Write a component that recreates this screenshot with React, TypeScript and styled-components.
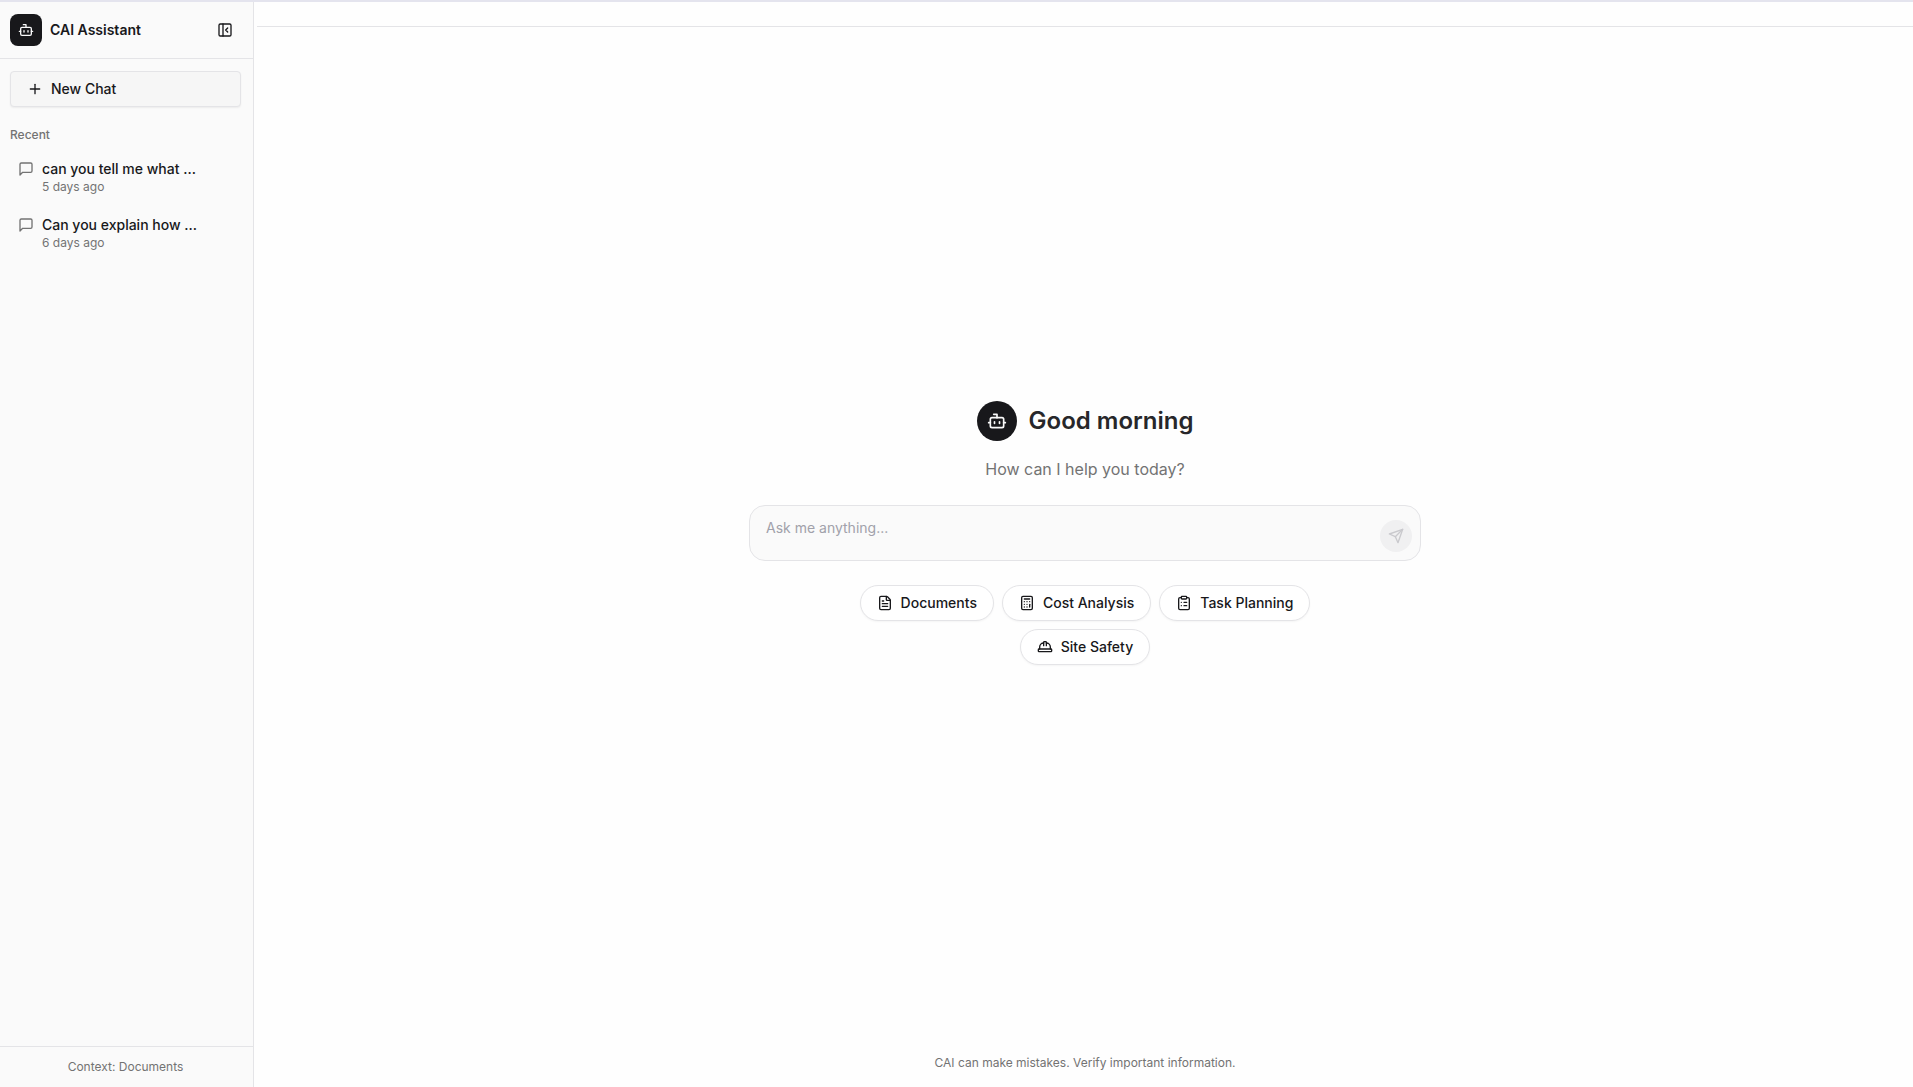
import React, { useState } from "react";
import styled, { createGlobalStyle } from "styled-components";
import {
  Bot,
  Calculator,
  ClipboardList,
  FileText,
  HardHat,
  PanelLeftClose,
  Plus,
  type LucideIcon,
} from "lucide-react";

const GlobalStyle = createGlobalStyle`
  *, *::before, *::after { box-sizing: border-box; }
  body {
    margin: 0;
    background: #fefefe;
    color: #18181b;
    font-family: Inter, "Liberation Sans", sans-serif;
    font-size: 14px;
    line-height: 20px;
  }
  button, textarea { font: inherit; color: inherit; }
  h1, h2, p, ul { margin: 0; padding: 0; }
`;

const Shell = styled.div`
  display: flex;
  min-height: 100vh;
  border-top: 2px solid #e4e4ee;
`;

const Sidebar = styled.aside`
  display: flex;
  flex-direction: column;
  flex: 0 0 254px;
  background: #fafafa;
  border-right: 1px solid #e4e4e7;
`;

const SidebarHeader = styled.header`
  display: flex;
  align-items: center;
  gap: 8px;
  padding: 12px 12px 12px 10px;
  border-bottom: 1px solid #e4e4e7;
`;

const Avatar = styled.span<{ $size: number; $radius: string }>`
  display: inline-flex;
  align-items: center;
  justify-content: center;
  flex: none;
  width: ${(p) => p.$size}px;
  height: ${(p) => p.$size}px;
  border-radius: ${(p) => p.$radius};
  background: #18181b;
  color: #fafafa;
`;

const Brand = styled.h2`
  flex: 1;
  font-size: 14px;
  font-weight: 600;
  line-height: 20px;
`;

const IconButton = styled.button`
  display: inline-flex;
  align-items: center;
  justify-content: center;
  width: 32px;
  height: 32px;
  padding: 0;
  border: 0;
  border-radius: 6px;
  background: transparent;
  cursor: pointer;
`;

const SidebarBody = styled.div`
  flex: 1;
  padding: 12px 12px 12px 10px;
`;

const NewChatButton = styled.button`
  display: flex;
  align-items: center;
  gap: 8px;
  width: 100%;
  height: 36px;
  padding: 0 16px;
  border: 1px solid #e4e4e7;
  border-radius: 4px;
  background: #f6f6f6;
  box-shadow: 0 1px 2px rgba(0, 0, 0, 0.06);
  font-weight: 500;
  cursor: pointer;
`;

const SectionLabel = styled.p`
  margin: 20px 0 8px;
  color: #737373;
  font-size: 12px;
  font-weight: 500;
  line-height: 16px;
`;

const ChatList = styled.ul`
  display: flex;
  flex-direction: column;
  gap: 4px;
  list-style: none;
`;

const ChatLink = styled.a`
  display: flex;
  gap: 8px;
  padding: 8px;
  border-radius: 6px;
  color: inherit;
  text-decoration: none;

  svg {
    flex: none;
    margin-top: 2px;
    color: #737373;
  }
`;

const ChatTitle = styled.span`
  display: block;
  font-weight: 500;
`;

const Caption = styled.span`
  display: block;
  color: #737373;
  font-size: 12px;
  line-height: 16px;
`;

const SidebarFooter = styled.footer`
  padding: 12px 12px 12px 10px;
  border-top: 1px solid #e4e4e7;
  text-align: center;
`;

const Main = styled.main`
  display: flex;
  flex-direction: column;
  flex: 1;
  min-width: 0;
  margin-left: 3px;
`;

const TopBar = styled.div`
  height: 25px;
  border-bottom: 1px solid #e4e4e7;
`;

const Welcome = styled.section`
  display: flex;
  flex-direction: column;
  align-items: center;
  justify-content: center;
  flex: 1;
  padding: 0 16px;
`;

const Greeting = styled.div`
  display: flex;
  align-items: center;
  gap: 12px;
`;

const Title = styled.h1`
  color: #27272a;
  font-size: 24px;
  font-weight: 600;
  line-height: 32px;
`;

const Subtitle = styled.p`
  margin-top: 16px;
  color: #737373;
  font-size: 16px;
  line-height: 24px;
`;

const Composer = styled.form`
  display: flex;
  align-items: flex-end;
  width: 100%;
  max-width: 672px;
  margin: 24px 0;
  border: 1px solid #e4e4e7;
  border-radius: 16px;
  background: #fafafa;
`;

const Prompt = styled.textarea`
  flex: 1;
  height: 54px;
  padding: 12px 16px;
  border: 0;
  outline: 0;
  resize: none;
  background: transparent;

  &::placeholder {
    color: #a1a1aa;
    opacity: 1;
  }
`;

const SendButton = styled.button`
  display: inline-flex;
  align-items: center;
  justify-content: center;
  width: 32px;
  height: 32px;
  margin: 8px;
  padding: 0;
  border: 0;
  border-radius: 50%;
  background: #f0f0f1;
  color: #c9c9cd;
`;

const Suggestions = styled.div`
  display: flex;
  flex-wrap: wrap;
  justify-content: center;
  gap: 8px;
  max-width: 512px;
`;

const Chip = styled.button`
  display: inline-flex;
  align-items: center;
  gap: 8px;
  height: 36px;
  padding: 0 16px;
  border: 1px solid #e4e4e7;
  border-radius: 18px;
  background: #ffffff;
  box-shadow: 0 1px 2px rgba(0, 0, 0, 0.04);
  font-weight: 500;
  cursor: pointer;
`;

const MainFooter = styled.footer`
  padding: 16px;
  text-align: center;
`;

const strokeProps = {
  width: 16,
  height: 16,
  viewBox: "0 0 24 24",
  fill: "none",
  stroke: "currentColor",
  strokeWidth: 2,
  strokeLinecap: "round" as const,
  strokeLinejoin: "round" as const,
  "aria-hidden": true,
};

const ChatIcon = () => (
  <svg {...strokeProps}>
    <path d="M21 15a2 2 0 0 1-2 2H7l-4 4V5a2 2 0 0 1 2-2h14a2 2 0 0 1 2 2z" />
  </svg>
);

const SendIcon = () => (
  <svg {...strokeProps}>
    <path d="m22 2-7 20-4-9-9-4Z" />
    <path d="M22 2 11 13" />
  </svg>
);

const chats = [
  { title: "can you tell me what ...", age: "5 days ago" },
  { title: "Can you explain how ...", age: "6 days ago" },
];

const suggestions: { label: string; icon: LucideIcon }[] = [
  { label: "Documents", icon: FileText },
  { label: "Cost Analysis", icon: Calculator },
  { label: "Task Planning", icon: ClipboardList },
  { label: "Site Safety", icon: HardHat },
];

export default function App() {
  const [prompt, setPrompt] = useState("");

  return (
    <>
      <GlobalStyle />
      <Shell>
        <Sidebar>
          <SidebarHeader>
            <Avatar $size={32} $radius="8px">
              <Bot size={16} />
            </Avatar>
            <Brand>CAI Assistant</Brand>
            <IconButton type="button" aria-label="Collapse sidebar">
              <PanelLeftClose size={16} />
            </IconButton>
          </SidebarHeader>
          <SidebarBody>
            <NewChatButton type="button">
              <Plus size={16} />
              New Chat
            </NewChatButton>
            <SectionLabel>Recent</SectionLabel>
            <ChatList>
              {chats.map((chat) => (
                <li key={chat.title}>
                  <ChatLink href="#">
                    <ChatIcon />
                    <span>
                      <ChatTitle>{chat.title}</ChatTitle>
                      <Caption>{chat.age}</Caption>
                    </span>
                  </ChatLink>
                </li>
              ))}
            </ChatList>
          </SidebarBody>
          <SidebarFooter>
            <Caption>Context: Documents</Caption>
          </SidebarFooter>
        </Sidebar>
        <Main>
          <TopBar />
          <Welcome>
            <Greeting>
              <Avatar $size={40} $radius="50%">
                <Bot size={20} />
              </Avatar>
              <Title>Good morning</Title>
            </Greeting>
            <Subtitle>How can I help you today?</Subtitle>
            <Composer onSubmit={(e) => e.preventDefault()}>
              <Prompt
                aria-label="Message"
                placeholder="Ask me anything..."
                rows={1}
                value={prompt}
                onChange={(e) => setPrompt(e.target.value)}
              />
              <SendButton type="submit" aria-label="Send" disabled={!prompt}>
                <SendIcon />
              </SendButton>
            </Composer>
            <Suggestions>
              {suggestions.map(({ label, icon: Icon }) => (
                <Chip key={label} type="button">
                  <Icon size={16} />
                  {label}
                </Chip>
              ))}
            </Suggestions>
          </Welcome>
          <MainFooter>
            <Caption>CAI can make mistakes. Verify important information.</Caption>
          </MainFooter>
        </Main>
      </Shell>
    </>
  );
}
